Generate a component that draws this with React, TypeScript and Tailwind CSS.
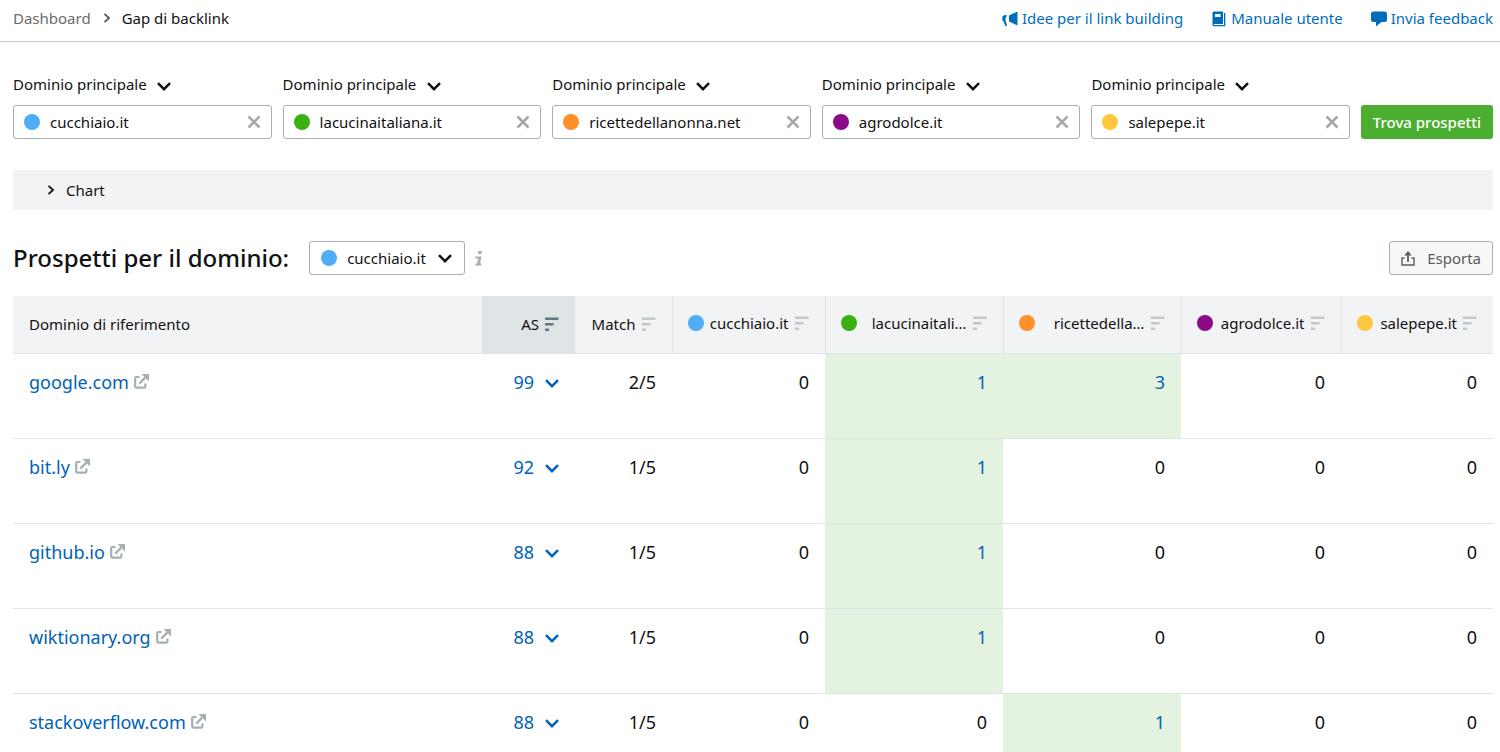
import React, { useState } from 'react';

type IconProps = { className?: string };

const MegaphoneIcon = ({ className }: IconProps) => (
  <svg viewBox="0 0 16 16" className={className} fill="currentColor" aria-hidden="true">
    <path d="M15.5 .5v14L7 10.500v-6z" />
    <path d="M4.500 4v1.800c-1 .6-1.200 2.200-.8 4l1.300 4.700-1.600 .8-1.900-5L.3 9.300V6C1 4.500 2.500 4 4.500 4z" />
  </svg>
);

const BookIcon = ({ className }: IconProps) => (
  <svg viewBox="0 0 14 16" className={className} fill="currentColor" aria-hidden="true">
    <path fillRule="evenodd" d="M1.500 .5H11v12.500H1.900v1h10.100V2h1.300v13.300H1.500L.5 14.300V1.500zM3 3v3h5.500V3z" />
  </svg>
);

const CommentIcon = ({ className }: IconProps) => (
  <svg viewBox="0 0 16 16" className={className} fill="currentColor" aria-hidden="true">
    <path d="M2.500 .5h11A2.500 2.500 0 0 1 16 3v5.500A2.500 2.500 0 0 1 13.500 11H10.500L5 15.500V11H2.500A2.500 2.500 0 0 1 0 8.500V3A2.500 2.500 0 0 1 2.500 .5z" />
  </svg>
);

const ChevronDown = ({ className }: IconProps) => (
  <svg viewBox="0 0 14 9" className={className} fill="none" stroke="currentColor" strokeWidth="2.500" aria-hidden="true">
    <path d="M1 1.200l6 6 6-6" />
  </svg>
);

const ChevronRight = ({ className }: IconProps) => (
  <svg viewBox="0 0 8 10" className={className} fill="none" stroke="currentColor" strokeWidth="1.800" aria-hidden="true">
    <path d="M1.500 .8L6 5 1.500 9.200" />
  </svg>
);

const CloseIcon = ({ className }: IconProps) => (
  <svg viewBox="0 0 14 14" className={className} fill="none" stroke="currentColor" strokeWidth="2.500" aria-hidden="true">
    <path d="M1.500 1.500l11 11M12.500 1.500l-11 11" />
  </svg>
);

const SortIcon = ({ className }: IconProps) => (
  <svg viewBox="0 0 14 14" className={className} fill="currentColor" aria-hidden="true">
    <path d="M0 .5h13.500v2.500H0zM0 6h8.500v2.500H0zM0 11.500h4V14H0z" />
  </svg>
);

const ExternalIcon = ({ className }: IconProps) => (
  <svg viewBox="0 0 15 15" className={className} fill="none" stroke="currentColor" strokeWidth="2.200" aria-hidden="true">
    <path d="M5.500 3H2.200a1 1 0 0 0-1 1v8.600a1 1 0 0 0 1 1h8.200a1 1 0 0 0 1-1V9.500" />
    <path d="M5.200 9.600l6-6" />
    <path d="M7.500 0H15v7.500l-2.500-2.500-2.500-2.500z" fill="currentColor" stroke="none" />
  </svg>
);

const ExportIcon = ({ className }: IconProps) => (
  <svg viewBox="0 0 14 15" className={className} fill="none" stroke="currentColor" aria-hidden="true">
    <path d="M3.500 7H1v7h12V7h-2.500" strokeWidth="1.400" />
    <path d="M7 11V3" strokeWidth="1.800" />
    <path d="M7 0l3.800 4.600H3.200z" fill="currentColor" stroke="none" />
  </svg>
);

const InfoIcon = ({ className }: IconProps) => (
  <svg viewBox="0 0 10 15" className={className} fill="currentColor" aria-hidden="true">
    <path d="M4.500 0h3.500l-.6 3H4zM1.500 5.500h6L6 12.500h1.500l-.4 2H1.200l.4-2h1.500l1-5H1z" />
  </svg>
);

const DOMAINS = [
  { name: 'cucchiaio.it', short: 'cucchiaio.it', dot: 'bg-[#4fadf5]' },
  { name: 'lacucinaitaliana.it', short: 'lacucinaitali…', dot: 'bg-[#3cb012]' },
  { name: 'ricettedellanonna.net', short: 'ricettedella…', dot: 'bg-[#ff9029]' },
  { name: 'agrodolce.it', short: 'agrodolce.it', dot: 'bg-[#8a0a87]' },
  { name: 'salepepe.it', short: 'salepepe.it', dot: 'bg-[#ffc63f]' },
];

const ROWS = [
  { domain: 'google.com', score: 99, match: '2/5', links: [0, 1, 3, 0, 0] },
  { domain: 'bit.ly', score: 92, match: '1/5', links: [0, 1, 0, 0, 0] },
  { domain: 'github.io', score: 88, match: '1/5', links: [0, 1, 0, 0, 0] },
  { domain: 'wiktionary.org', score: 88, match: '1/5', links: [0, 1, 0, 0, 0] },
  { domain: 'stackoverflow.com', score: 88, match: '1/5', links: [0, 0, 1, 0, 0] },
];

const HELP_LINKS = [
  { label: 'Idee per il link building', Icon: MegaphoneIcon },
  { label: 'Manuale utente', Icon: BookIcon },
  { label: 'Invia feedback', Icon: CommentIcon },
];

const Dot = ({ color }: { color: string }) => (
  <span className={`size-4 shrink-0 rounded-full ${color}`} />
);

const TopBar = () => (
  <header className="flex h-[42px] items-center justify-between border-b border-[#c8cacb] pr-[7px] pb-[6px] pl-[13px]">
    <nav aria-label="Breadcrumb" className="flex items-center">
      <a href="#" className="text-[#6b6b6b]">Dashboard</a>
      <ChevronRight className="mr-[11px] ml-3 h-[10px] w-2 text-[#555]" />
      <span>Gap di backlink</span>
    </nav>
    <div className="flex items-center gap-7">
      {HELP_LINKS.map(({ label, Icon }) => (
        <a key={label} href="#" className="flex items-center gap-1 text-[#006dba]">
          <Icon className="mt-[3px] size-4" />
          {label}
        </a>
      ))}
    </div>
  </header>
);

const DomainField = ({ name, dot }: { name: string; dot: string }) => {
  const [value, setValue] = useState(name);
  return (
    <div className="min-w-0 flex-1">
      <div className="relative flex h-6 w-fit items-center">
        <select aria-label={`Tipo per ${name}`} className="h-6 appearance-none bg-transparent pr-6">
          <option>Dominio principale</option>
        </select>
        <ChevronDown className="pointer-events-none absolute top-[10px] right-0 h-[9px] w-[14px]" />
      </div>
      <div className="mt-[9px] flex h-[34px] items-center rounded-[3px] border border-[#a6b0b3] px-[10px]">
        <Dot color={dot} />
        <input
          aria-label={`Dominio ${name}`}
          value={value}
          onChange={(e) => setValue(e.target.value)}
          className="ml-[10px] min-w-0 flex-1 bg-transparent outline-none"
        />
        <button type="button" aria-label={`Cancella ${name}`} onClick={() => setValue('')} className="text-[#a5a8a9]">
          <CloseIcon className="size-[14px]" />
        </button>
      </div>
    </div>
  );
};

const ProspectTable = () => (
  <table className="mt-[21px] w-full table-fixed border-collapse">
    <colgroup>
      <col />
      <col className="w-[93px]" />
      <col className="w-[97px]" />
      <col className="w-[153px]" />
      <col className="w-[178px]" />
      <col className="w-[178px]" />
      <col className="w-[160px]" />
      <col className="w-[152px]" />
    </colgroup>
    <thead>
      <tr className="h-[57px] border-b border-[#dfe4e6] bg-[#f1f3f4]">
        <th scope="col" className="pl-4 text-left font-normal">Dominio di riferimento</th>
        <th scope="col" aria-sort="descending" className="bg-[#dfe4e6] pr-4 font-normal">
          <button type="button" className="ml-auto flex items-center gap-[6px]">
            AS <SortIcon className="size-[14px] text-[#5f7a80]" />
          </button>
        </th>
        <th scope="col" className="border-r border-[#dfe4e6] pr-4 font-normal">
          <button type="button" className="ml-auto flex items-center gap-[6px]">
            Match <SortIcon className="size-[14px] text-[#c0c8ca]" />
          </button>
        </th>
        {DOMAINS.map(({ name, short, dot }) => (
          <th key={name} scope="col" className="border-r border-[#dfe4e6] pr-4 pb-[2px] pl-[15px] font-normal last:border-r-0">
            <button type="button" title={name} className="flex w-full items-center">
              <Dot color={dot} />
              <span className="flex-1 text-right whitespace-nowrap">{short}</span>
              <SortIcon className="ml-[6px] size-[14px] shrink-0 text-[#c0c8ca]" />
            </button>
          </th>
        ))}
      </tr>
    </thead>
    <tbody className="text-lg leading-6">
      {ROWS.map((row) => (
        <tr key={row.domain} className="h-[85px] border-b border-[#dfe4e6] align-top">
          <td className="pt-4 pl-4">
            <div className="flex items-center gap-[5px]">
              <a href="#" className="text-[#0062b8]">{row.domain}</a>
              <a href="#" aria-label={`Apri ${row.domain}`} className="text-[#a5b0b2]">
                <ExternalIcon className="size-[15px]" />
              </a>
            </div>
          </td>
          <td className="pt-4 pr-4">
            <button type="button" className="ml-auto flex items-center gap-[11px] text-[#0062b8]">
              {row.score} <ChevronDown className="mt-1 h-[9px] w-[14px]" />
            </button>
          </td>
          <td className="pt-4 pr-4 text-right">{row.match}</td>
          {row.links.map((count, i) => (
            <td key={DOMAINS[i].name} className={`pt-4 pr-4 text-right ${count > 0 ? 'bg-[#e3f3df]' : ''}`}>
              {count > 0 ? <a href="#" className="text-[#0062b8]">{count}</a> : count}
            </td>
          ))}
        </tr>
      ))}
    </tbody>
  </table>
);

export default function App() {
  return (
    <div className="bg-white font-['Noto_Sans',sans-serif] text-[15px] leading-6 text-[#111]">
      <TopBar />
      <main className="pr-[7px] pl-[13px]">
        <form className="flex items-end gap-[11px] pt-[30px]" onSubmit={(e) => e.preventDefault()}>
          {DOMAINS.map((d) => (
            <DomainField key={d.name} name={d.name} dot={d.dot} />
          ))}
          <button type="submit" className="h-[34px] w-[132px] rounded-[3px] bg-[#4bae31] font-medium whitespace-nowrap text-white">
            Trova prospetti
          </button>
        </form>

        <button type="button" aria-expanded="false" className="mt-[31px] flex h-10 w-full items-center bg-[#f1f3f4] pl-[34px]">
          <ChevronRight className="mr-[11px] h-[10px] w-2" />
          Chart
        </button>

        <div className="mt-[31px] flex items-center">
          <h1 className="text-2xl font-medium">
            <label htmlFor="prospect-domain">Prospetti per il dominio:</label>
          </h1>
          <div className="relative ml-5 flex h-[34px] w-[156px] items-center rounded-[3px] border border-[#a6b0b3] pl-[11px]">
            <Dot color="bg-[#4fadf5]" />
            <select id="prospect-domain" className="h-full min-w-0 flex-1 appearance-none bg-transparent pl-[10px]">
              {DOMAINS.map((d) => (
                <option key={d.name}>{d.name}</option>
              ))}
            </select>
            <ChevronDown className="pointer-events-none absolute top-3 right-3 h-[9px] w-[14px]" />
          </div>
          <InfoIcon className="ml-[9px] h-[15px] w-[10px] text-[#a5b0b2]" />
          <button type="button" className="ml-auto flex h-[34px] w-[104px] items-center justify-between rounded-[3px] border border-[#a6b0b3] bg-[#f6f7f7] px-[11px] text-[#5c5c5c]">
            <ExportIcon className="h-[15px] w-[14px]" />
            Esporta
          </button>
        </div>

        <ProspectTable />
      </main>
    </div>
  );
}
